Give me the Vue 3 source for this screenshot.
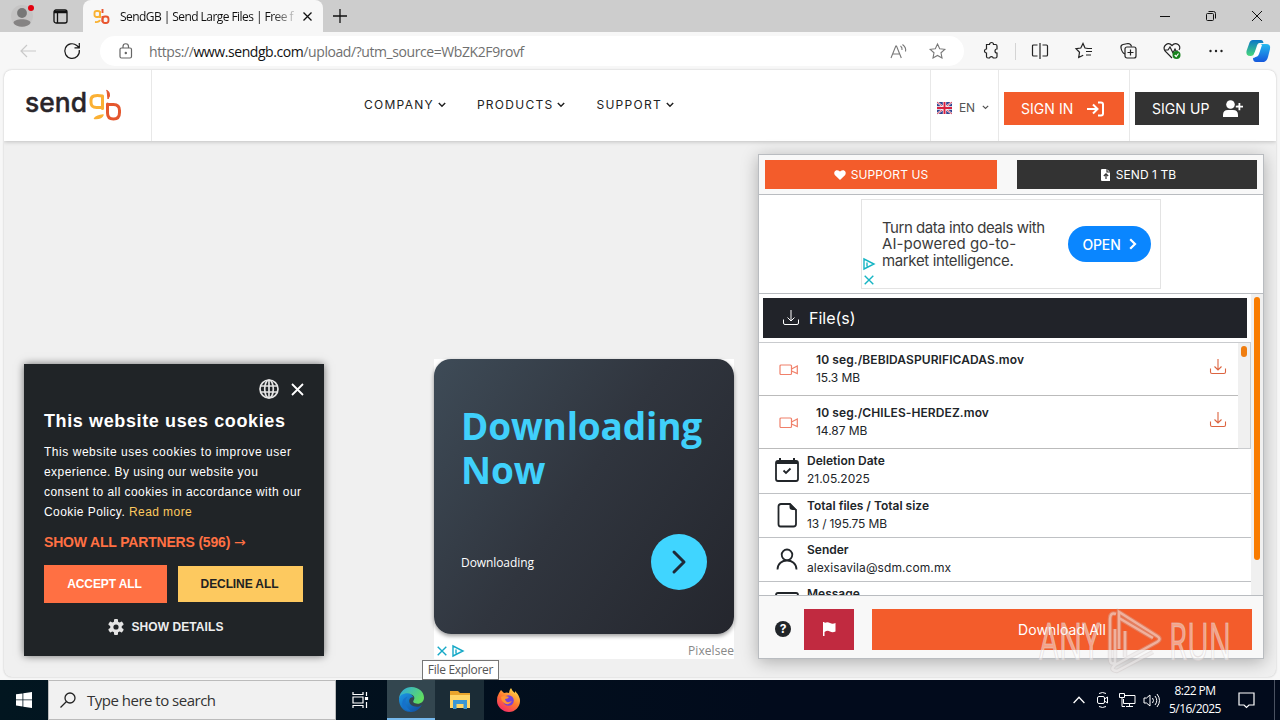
<template>
  <div class="desktop">
    <div class="titlebar">
      <div class="profile">
        <svg width="24" height="24" viewBox="0 0 24 24">
          <circle cx="12" cy="12" r="11" fill="#c5c4c4" />
          <circle cx="12" cy="9" r="4.900" fill="#777" />
          <path d="M3.500 19c0-5 17-5 17 0-3 5-14 5-17 0z" fill="#858383" />
          <circle cx="21" cy="4" r="3" fill="#e3000f" />
        </svg>
      </div>
      <div class="workspaces">
        <svg width="15" height="15" viewBox="0 0 15 15" fill="none" stroke="#111" stroke-width="1.300">
          <rect x="1" y="1" width="13" height="13" rx="2" />
          <path d="M1 3h13" stroke-width="2.500" />
          <path d="M4.500 3v11" />
        </svg>
      </div>
      <div class="tab">
        <svg class="favicon" width="17" height="17" viewBox="0 0 17 17" fill="none" stroke-width="1.900">
          <rect x="1.500" y="3" width="5.500" height="6" rx="2" stroke="#f9b233" />
          <path d="M7 3v7M2 14q4 .5 5-2" stroke="#f9b233" />
          <path d="M9.500 1v4M9.500 8v6" stroke="#e8552f" />
          <rect x="9.500" y="8.500" width="6" height="6.500" rx="2.500" stroke="#e8552f" />
        </svg>
        <span class="tab-title">SendGB | Send Large Files | Free f</span>
        <svg width="9" height="9" viewBox="0 0 9 9" stroke="#111" stroke-width="1.300">
          <path d="M.5.5l8 8M8.500.5l-8 8" />
        </svg>
      </div>
      <svg class="new-tab" width="14" height="14" viewBox="0 0 14 14" stroke="#111" stroke-width="1.300">
        <path d="M7 0v14M0 7h14" />
      </svg>
      <div class="window-buttons">
        <svg width="12" height="12" viewBox="0 0 12 12" fill="none" stroke="#111"><path d="M1 6.500h10" /></svg>
        <svg width="12" height="12" viewBox="0 0 12 12" fill="none" stroke="#111">
          <rect x="1.500" y="3.500" width="7" height="7" rx="1" />
          <path d="M3.500 1.500h5q2 0 2 2v5" />
        </svg>
        <svg width="12" height="12" viewBox="0 0 12 12" fill="none" stroke="#111"><path d="M1 1l10 10M11 1L1 11" /></svg>
      </div>
    </div>

    <div class="toolbar">
      <svg class="back" width="16" height="14" viewBox="0 0 16 14" fill="none" stroke="#c9c9c9" stroke-width="1.200">
        <path d="M16 7H1M7 1L1 7l6 6" />
      </svg>
      <svg class="reload" width="18" height="18" viewBox="0 0 18 18" fill="none" stroke="#1a1a1a" stroke-width="1.200">
        <path d="M16.300 8A7.300 7.300 0 1 1 13.800 3.500L16 5.500M16.300 1v4.800h-4.800" />
      </svg>
      <div class="address">
        <svg width="14" height="16" viewBox="0 0 14 16" fill="none" stroke="#666" stroke-width="1.200">
          <rect x="1" y="5" width="11.500" height="10" rx="1.500" />
          <path d="M4 5V3.500a2.700 2.700 0 0 1 5.500 0V5" />
          <circle cx="6.800" cy="10" r=".6" fill="#666" />
        </svg>
        <span class="url">https://<b>www.sendgb.com</b>/upload/?utm_source=WbZK2F9rovf</span>
        <svg class="read" width="17" height="15" viewBox="0 0 17 15" fill="none" stroke="#777" stroke-width="1.100">
          <path d="M1 14L5.800 2h.7l4.800 12M3 10h6.500M10.500 2q2 1.500 1.500 4M12.500.5q4 3 3 7" />
        </svg>
        <svg width="17" height="16" viewBox="0 0 17 16" fill="none" stroke="#777" stroke-width="1.100">
          <path d="M8.500 1l2.200 4.700 5.100.6-3.800 3.500 1 5.100-4.500-2.500L4 14.900l1-5.100-3.800-3.500 5.100-.6z" />
        </svg>
      </div>
      <div class="toolbar-icons">
        <svg width="18" height="18" viewBox="0 0 18 18"><path d="M4.500 2.500h3a2 2 0 0 1 4 0h2q1.500 0 1.500 1.500v3a2 2 0 0 0 0 4v3.500q0 1.500-1.500 1.500h-2.200a2 2 0 0 0-3.800 0H6q-1.500 0-1.500-1.500V11a2 2 0 1 1 0-4z" /></svg>
        <i class="divider"></i>
        <svg width="18" height="18" viewBox="0 0 18 18"><path d="M6.500 3h-4q-1 0-1 1v9q0 1 1 1h4M11.500 3h4q1 0 1 1v9q0 1-1 1h-4M9 1v16" /></svg>
        <svg width="18" height="18" viewBox="0 0 18 18"><path d="M13 6.500L10 6 8 1.500 5.800 6 1 6.700l3.500 3.600L3.700 15.500l4.500-2.300M11 9.500h6M11 13h5M11.500 6.500h5.500" /></svg>
        <svg width="18" height="18" viewBox="0 0 18 18"><path d="M6 12Q3 11 2 6q-.5-3 2-3.500l5-1q3 0 3.500 3" /><rect x="6" y="5" width="11" height="11" rx="2" /><path d="M11.500 7.500v6M8.500 10.500h6" /></svg>
        <svg width="18" height="18" viewBox="0 0 18 18">
          <path d="M9 16L2 9C-1 4 5-1 9 3.500 13-1 19 4 16 8M1 8h4l2-3 3 6 2-4 1 2h2" />
          <circle cx="13.500" cy="13" r="4" fill="#16821c" stroke="none" />
          <path d="M11.700 13l1.500 1.500 2.300-3" stroke="#fff" />
        </svg>
        <svg width="18" height="18" viewBox="0 0 18 18"><g fill="#222" stroke="none"><circle cx="3.500" cy="9" r="1.200" /><circle cx="9" cy="9" r="1.200" /><circle cx="14.500" cy="9" r="1.200" /></g></svg>
      </div>
      <svg class="copilot" width="24" height="24" viewBox="0 0 24 24">
        <defs>
          <linearGradient id="cpa" x1="0" y1="0" x2="0" y2="1"><stop offset="0" stop-color="#0a75c8" /><stop offset="1" stop-color="#47d87b" /></linearGradient>
          <linearGradient id="cpb" x1="0" y1="0" x2="0" y2="1"><stop offset="0" stop-color="#24b9ee" /><stop offset="1" stop-color="#1558dc" /></linearGradient>
        </defs>
        <path d="M7 1h8q2 0 2.500 3h-4q-2 0-3 4l-2 6q-1 3-4 3-5 0-4-5L3 5q1-4 4-4z" fill="url(#cpa)" />
        <path d="M17 5h3q5 0 4 5l-2 8q-1 4-4 5h-8q-3 0-3-4 3 0 4-4l2-6q1-4 4-4z" fill="url(#cpb)" />
        <path d="M11 9q1-4 5-3l-3 9q-1 3-4 3-2 0-1-3z" fill="#fff" />
      </svg>
    </div>

    <div class="viewport">
      <header class="site-header">
        <div class="logo">
          <svg width="98" height="34" viewBox="0 0 98 34" fill="none" stroke-linecap="round" stroke-linejoin="round">
            <text class="logo-word" x="0" y="24" textLength="62" lengthAdjust="spacingAndGlyphs">send</text>
            <path d="M77.500 8q-11.500-2-11.500 4v2.500q0 5 5.500 5h6z" stroke="#fbb034" stroke-width="3" />
            <path d="M77.500 9v11.500" stroke="#fbb034" stroke-width="3" />
            <path d="M69.500 30.500q7 .5 8.500-3.500-6 .5-8.500 3.500z" fill="#fbb034" stroke="#fbb034" stroke-width="1.500" />
            <path d="M82 2.500l1 8.500 1.500-3Q85 3.500 82 2.500z" fill="#e4572e" stroke="#e4572e" stroke-width="1" />
            <path d="M82.500 16v9q0 6 6 6t6-6.500v-2q0-6-6-6h-6" stroke="#e4572e" stroke-width="3" />
          </svg>
        </div>
        <nav>
          <a v-for="item in menu" :key="item">
            {{ item }}
            <svg width="8" height="6" viewBox="0 0 8 6" fill="none" stroke="#222" stroke-width="1.500"><path d="M.8 1L4 4.200 7.200 1" /></svg>
          </a>
        </nav>
        <div class="lang">
          <svg width="15" height="12" viewBox="0 0 15 12">
            <rect width="15" height="12" rx="1.500" fill="#33438f" />
            <path d="M0 0l15 12M15 0L0 12" stroke="#fff" stroke-width="1.800" />
            <path d="M0 0l15 12M15 0L0 12" stroke="#d8314b" stroke-width=".9" />
            <path d="M7.500 0v12M0 6h15" stroke="#fff" stroke-width="3.400" />
            <path d="M7.500 0v12M0 6h15" stroke="#d8213f" stroke-width="2" />
          </svg>
          <span>EN</span>
          <svg width="7" height="5" viewBox="0 0 7 5" fill="none" stroke="#555" stroke-width="1.200"><path d="M.8.8l2.700 2.700L6.200.8" /></svg>
        </div>
        <div class="sign sign-in">
          <button>
            SIGN IN
            <svg width="17" height="16" viewBox="0 0 17 16" fill="none" stroke="#fff" stroke-width="2">
              <path d="M0 8h10M6 3.500L10.500 8 6 12.500M11 1.500h3q2 0 2 2v9q0 2-2 2h-3" />
            </svg>
          </button>
        </div>
        <div class="sign sign-up">
          <button>
            SIGN UP
            <svg width="21" height="17" viewBox="0 0 21 17" fill="#fff">
              <circle cx="7.500" cy="4.500" r="4.300" />
              <path d="M0 17v-2q0-5 5-5h5q5 0 5 5v2zM15.500 5.500V3h1.800v2.700H20v1.800h-2.700v2.700h-1.800V7.500h-2.700V5.700z" />
            </svg>
          </button>
        </div>
      </header>

      <main>
        <div class="banner">
          <div class="banner-card">
            <h2>Downloading<br />Now</h2>
            <div class="banner-foot">
              <span>Downloading</span>
              <div class="go">
                <svg width="14" height="24" viewBox="0 0 14 24" fill="none" stroke="#1e2a38" stroke-width="3" stroke-linecap="round" stroke-linejoin="round"><path d="M2 2l10 10L2 22" /></svg>
              </div>
            </div>
          </div>
          <div class="banner-info">
            <svg width="10" height="10" viewBox="0 0 10 10" stroke="#16a9c7" stroke-width="1.400"><path d="M.7.7l8.600 8.600M9.300.7L.7 9.300" /></svg>
            <svg width="12" height="12" viewBox="0 0 12 12" fill="none" stroke="#16a9c7" stroke-width="1.400"><path d="M1 1l10 5-10 5zM4 4.500v4" /></svg>
            <span>Pixelsee</span>
          </div>
        </div>

        <section class="panel">
          <div class="panel-top">
            <button class="support">
              <svg width="12" height="10" viewBox="0 0 12 10" fill="#fff"><path d="M6 10L.8 5C-1 2 2-1.500 6 1.500 10-1.500 13 2 11.200 5z" /></svg>
              SUPPORT US
            </button>
            <button class="send">
              <svg width="10" height="12" viewBox="0 0 10 12"><path d="M1 0h5l3 3v9H1q-1 0-1-1V1q0-1 1-1z" fill="#fff" /><path d="M5 10V5M2.800 7L5 4.800 7.200 7M6 0v3h4" fill="none" stroke="#333" stroke-width="1.200" /></svg>
              SEND 1 TB
            </button>
          </div>

          <div class="ad-row">
            <div class="ad">
              <div class="ad-marks">
                <svg width="12" height="12" viewBox="0 0 12 12" fill="none" stroke="#16b5c4" stroke-width="1.400"><path d="M1 1l10 5-10 5zM4 4.500v4" /></svg>
                <svg width="10" height="10" viewBox="0 0 10 10" stroke="#16b5c4" stroke-width="1.400"><path d="M.7.7l8.600 8.600M9.300.7L.7 9.300" /></svg>
              </div>
              <p>Turn data into deals with<br /><span class="loose">AI-powered go-to-</span><br /><span class="last">market intelligence.</span></p>
              <div class="open">
                OPEN
                <svg width="8" height="12" viewBox="0 0 8 12" fill="none" stroke="#fff" stroke-width="2.200"><path d="M1.200 1.200L6 6l-4.800 4.800" /></svg>
              </div>
            </div>
          </div>

          <div class="panel-body">
            <div class="body-content">
              <div class="files-head">
                <svg width="16" height="16" viewBox="0 0 16 16" fill="none" stroke="#fff"><path :d="downloadPath" /></svg>
                File(s)
              </div>
              <div class="files">
                <div class="file-list">
                  <div v-for="file in files" :key="file.name" class="file">
                    <svg class="video" width="20" height="12" viewBox="0 0 20 12" fill="none" stroke="#f0806a" stroke-width="1.200">
                      <rect x="1" y="1" width="11.500" height="9.500" rx="1" />
                      <path d="M12.500 5l5.800-3v7.500L12.500 7" />
                    </svg>
                    <div class="text">
                      <b>{{ file.name }}</b>
                      <span>{{ file.size }}</span>
                    </div>
                    <svg class="get" width="16" height="16" viewBox="0 0 16 16" fill="none" stroke="#dc6440" stroke-width="1.100"><path :d="downloadPath" /></svg>
                  </div>
                </div>
                <div class="inner-track"><i></i></div>
              </div>
              <div v-for="row in details" :key="row.label" class="detail">
                <svg width="24" height="26" viewBox="0 0 24 26" fill="none" stroke="#212529" stroke-width="1.800"><path :d="row.icon" /><path v-if="row.fill" :d="row.fill" fill="#212529" stroke="none" /></svg>
                <div class="text">
                  <b>{{ row.label }}</b>
                  <span>{{ row.value }}</span>
                </div>
              </div>
            </div>
            <div class="track"><i></i></div>
          </div>

          <div class="panel-foot">
            <div class="help">?</div>
            <button class="flag">
              <svg width="13" height="14" viewBox="0 0 13 14" fill="#fff"><path d="M0 0h1.500v1q3-1.500 5.500 0t5.500 0v8.500q-3 1.500-5.500 0t-5.500.5v4H0z" /></svg>
            </button>
            <button class="download">Download All</button>
          </div>
        </section>
      </main>
    </div>

    <div class="cookies">
      <div class="cookie-tools">
        <svg width="20" height="20" viewBox="0 0 20 20" fill="none" stroke="#e4e4e4" stroke-width="1.700">
          <circle cx="10" cy="10" r="9" />
          <ellipse cx="10" cy="10" rx="4.300" ry="9" />
          <path d="M1.500 7h17M1.500 13h17M10 1v18" />
        </svg>
        <svg width="13" height="13" viewBox="0 0 13 13" stroke="#fff" stroke-width="1.800"><path d="M1 1l11 11M12 1L1 12" /></svg>
      </div>
      <h3>This website uses cookies</h3>
      <p><span class="wide">This website uses cookies to improve user</span><br />experience. By using our website you<br />consent to all cookies in accordance with our<br />Cookie Policy. <a>Read more</a></p>
      <div class="partners">SHOW ALL PARTNERS (596) <span>→</span></div>
      <div class="choices">
        <button class="accept">ACCEPT ALL</button>
        <button class="decline">DECLINE ALL</button>
      </div>
      <div class="show-details">
        <svg width="16" height="16" viewBox="0 0 16 16">
          <g fill="#e4e4e4"><rect v-for="a in [0, 60, 120]" :key="a" x="6" y="0" width="4" height="16" rx="1" :transform="`rotate(${a} 8 8)`" /><circle cx="8" cy="8" r="5.800" /></g>
          <circle cx="8" cy="8" r="2.600" fill="#202427" />
        </svg>
        SHOW DETAILS
      </div>
    </div>

    <svg class="watermark" width="200" height="66" viewBox="0 0 200 66">
      <text x="4" y="51" textLength="61" lengthAdjust="spacingAndGlyphs">ANY</text>
      <text x="134" y="51" textLength="62" lengthAdjust="spacingAndGlyphs">RUN</text>
      <path class="edge" :d="markPath" />
      <path class="band" :d="markPath" />
    </svg>

    <div class="taskbar">
      <div class="start">
        <svg width="16" height="16" viewBox="0 0 16 16" fill="#fff"><path d="M0 2.300l6.500-.9v6.100H0zM7.300 1.300L16 0v7.500H7.300zM0 8.300h6.500v6.200L0 13.600zM7.300 8.300H16V16l-8.700-1.300z" /></svg>
      </div>
      <div class="search">
        <svg width="16" height="16" viewBox="0 0 16 16" fill="none" stroke="#222" stroke-width="1.300"><circle cx="10" cy="6" r="5" /><path d="M6.500 9.500L.5 15.500" /></svg>
        <span>Type here to search</span>
      </div>
      <div class="task">
        <svg width="17" height="16" viewBox="0 0 17 16" fill="none" stroke="#fff" stroke-width="1.200"><path d="M1 0v2.500h10V0M1 16v-2.500h10V16M1 5h10v6H1zM14.500 0v4M14.500 10v6" /><path d="M13.500 5.500h2v2h-2z" fill="#fff" /></svg>
      </div>
      <div class="task active">
        <svg width="25" height="25" viewBox="0 0 24 24">
          <defs>
            <linearGradient id="edg" x1="0" y1="0" x2="1" y2=".5"><stop offset="0" stop-color="#2aa7e8" /><stop offset="1" stop-color="#60dd60" /></linearGradient>
            <linearGradient id="edb" x1="0" y1="0" x2="1" y2="1"><stop offset="0" stop-color="#1b98e6" /><stop offset="1" stop-color="#104a9c" /></linearGradient>
          </defs>
          <path d="M0 11C1 4 6 0 12 0c7 0 12 5 12 10 0 4-3 6-6 6-4 0-5-2-4-3 2-3 0-6-4-6-5 0-8 2-10 4z" fill="url(#edg)" />
          <path d="M0 12c0-4 4-6 8-6 3 0 5 2 6 4-6-1-6 9 3 9 2 0 4-1 5-2-3 6-8 7-11 7C4 24 0 18 0 12z" fill="url(#edb)" />
          <path d="M8 9q-5 7 3 14-7 0-8-7 0-5 5-7z" fill="#1671ca" />
        </svg>
      </div>
      <div class="task hover">
        <svg width="22" height="20" viewBox="0 0 22 20">
          <path d="M1 1h8l2 2h10v4H1z" fill="#e9a52c" />
          <path d="M1 5h20v13H1z" fill="#ffd667" />
          <path d="M4 10h14v9h-3.500v-5h-7v5H4z" fill="#3a97d4" />
        </svg>
      </div>
      <div class="task">
        <svg width="23" height="24" viewBox="0 0 23 24">
          <defs><linearGradient id="ffx" x1=".8" y1="0" x2=".2" y2="1"><stop offset="0" stop-color="#ffe14a" /><stop offset=".5" stop-color="#ff7a2e" /><stop offset="1" stop-color="#f4246c" /></linearGradient></defs>
          <path d="M2 5l2-3 3 3q3-1 5 0 0-3 2-5 1 3 4 5V3q5 5 5 10c0 6-5 11-11 11S0 19 0 13q0-5 2-8z" fill="url(#ffx)" />
          <circle cx="11.500" cy="12.500" r="5.300" fill="#7542d9" />
          <path d="M4 9q3-2 8 0-1 2-4 2 1 5 7 2-4 6-9 1Q4 12 4 9z" fill="#ff9530" />
        </svg>
      </div>
      <div class="tray">
        <svg width="12" height="8" viewBox="0 0 12 8" fill="none" stroke="#fff" stroke-width="1.300"><path d="M.6 7L6 1.300 11.400 7" /></svg>
        <svg width="13" height="16" viewBox="0 0 13 16" fill="none" stroke="#fff"><rect x="1.500" y="4.500" width="7" height="7" rx="1.500" /><path d="M8.500 7L11.500 5v6l-3-2M3 1.500q3.500-2 7 0M3 14.500q3.500 2 7 0" /></svg>
        <svg width="17" height="15" viewBox="0 0 17 15" fill="none" stroke="#fff"><path d="M6 2.500h10v8H4.500V6M10.500 10.500v3M7 13.500h7M.5.5h5v4h-5zM3 5v8.500h3" /></svg>
        <svg width="17" height="15" viewBox="0 0 17 15" fill="none" stroke="#fff"><path d="M1 5h2.500L7 2v11l-3.500-3H1zM9.500 5q2 2.500 0 5M12 3q3.500 4.500 0 9M14 1q5 6.500 0 13" /></svg>
        <div class="clock"><span>8:22 PM</span><span>5/16/2025</span></div>
        <svg width="17" height="17" viewBox="0 0 17 17" fill="none" stroke="#fff" stroke-width="1.200"><path d="M1 1h15v12h-5l-2.500 2.500L6 13H1z" /></svg>
        <i class="peek"></i>
      </div>
    </div>
    <div class="tooltip">File Explorer</div>
  </div>
</template>

<script setup>
const menu = ["COMPANY", "PRODUCTS", "SUPPORT"];

const files = [
  { name: "10 seg./BEBIDASPURIFICADAS.mov", size: "15.3 MB" },
  { name: "10 seg./CHILES-HERDEZ.mov", size: "14.87 MB" },
];

const downloadPath = "M.5 9.500V13q0 1.500 1.500 1.500h12q1.500 0 1.500-1.500V9.500M8 0v11M4.500 7.500L8 11l3.500-3.500";

const markPath = "M81 5q-6-2-6 5v40q0 6 5 4V20M84 40V3l38 24q5 3 0 6L80 56q-6 5 2 6l36-19M84 9l34 20M90 48V22";

const details = [
  {
    label: "Deletion Date",
    value: "21.05.2025",
    icon: "M3 3h18q2 0 2 2v16q0 2-2 2H3q-2 0-2-2V5q0-2 2-2zM8.500 12.500l2.500 2.500 4.500-4.500",
    fill: "M1 3h3V0h2v2h12V0h2v3h3v3H1z",
  },
  {
    label: "Total files / Total size",
    value: "13 / 195.75 MB",
    icon: "M6 1h9l6 6v14q0 2.500-2.500 2.500h-13Q3.500 23.500 3.500 21V3.500Q3.500 1 6 1z",
    fill: "M14.500 0v4q0 3 3 3H22z",
  },
  {
    label: "Sender",
    value: "alexisavila@sdm.com.mx",
    icon: "M12 2.500a5.300 5.300 0 1 1 0 10.600a5.300 5.300 0 1 1 0-10.600zM2.500 22.500c0-12 19-12 19 0",
  },
  { label: "Message", value: "", icon: "M3 2h18q2 0 2 2v14H1V4q0-2 2-2z" },
];
</script>

<style>
body {
  margin: 0;
  overflow: hidden;
}
</style>

<style scoped>
* {
  box-sizing: border-box;
}

.desktop {
  position: relative;
  display: flex;
  flex-direction: column;
  width: 1280px;
  height: 720px;
  overflow: hidden;
  background: #f7f7f7;
  font-family: Inter, "Liberation Sans", sans-serif;
  color: #212529;
}

svg {
  display: block;
  flex-shrink: 0;
  overflow: visible;
}

button {
  display: flex;
  align-items: center;
  justify-content: center;
  border: 0;
  padding: 0;
  color: #fff;
  font-family: inherit;
}

.titlebar {
  display: flex;
  align-items: center;
  height: 32px;
  flex-shrink: 0;
  background: #cdcdcd;
}

.profile {
  padding-left: 10px;
  width: 53px;
}

.workspaces {
  width: 30px;
}

.tab {
  display: flex;
  align-items: center;
  width: 240px;
  height: 32px;
  padding-left: 10px;
  border-radius: 8px 8px 0 0;
  background: #f7f7f7;
}

.tab-title {
  width: 182px;
  margin: 0 1px 0 10px;
  overflow: hidden;
  white-space: nowrap;
  font: 12px "Open Sans", sans-serif;
  letter-spacing: -0.56px;
  color: #111;
  -webkit-mask-image: linear-gradient(90deg, #000 152px, transparent 180px);
}

.new-tab {
  margin-left: 10px;
}

.window-buttons {
  display: flex;
  gap: 34px;
  margin: 0 17px 0 auto;
}

.toolbar {
  display: flex;
  align-items: center;
  height: 38px;
  flex-shrink: 0;
}

.back {
  margin-left: 20px;
}

.reload {
  margin-left: 27px;
}

.address {
  display: flex;
  align-items: center;
  width: 864px;
  height: 30px;
  margin-left: 19px;
  padding: 0 18px 0 19px;
  border-radius: 15px;
  background: #fff;
}

.url {
  margin-left: 16px;
  white-space: nowrap;
  font: 14px "Open Sans", sans-serif;
  letter-spacing: -0.42px;
  color: #707070;
}

.url b {
  font-weight: 400;
  color: #111;
}

.read {
  margin: 0 22px 0 auto;
}

.toolbar-icons {
  display: flex;
  align-items: center;
  gap: 26px;
  margin-left: 18px;
}

.toolbar-icons svg {
  fill: none;
  stroke: #222;
  stroke-width: 1.2;
}

.divider {
  width: 1px;
  height: 17px;
  margin: 0 -11px 0 -11px;
  background: #d4d4d4;
}

.copilot {
  margin-left: 21px;
}

.viewport {
  display: flex;
  flex-direction: column;
  height: 607px;
  margin: 0 4px 3px;
  border-radius: 8px;
  overflow: hidden;
  background: #f0f0f0;
  box-shadow: 0 0 2px #bbb;
}

.site-header {
  display: flex;
  height: 71px;
  flex-shrink: 0;
  background: #fff;
  box-shadow: 0 1px 4px rgba(0, 0, 0, 0.2);
}

.logo {
  width: 148px;
  padding: 18px 0 0 21px;
  border-right: 1px solid #e8e8e8;
}

.logo-word {
  font: 500 27px Inter, sans-serif;
  fill: #29252a;
  stroke: #29252a;
  stroke-width: 0.4;
}

nav {
  display: flex;
  gap: 31px;
  width: 778px;
  padding: 27px 0 0 212px;
}

nav a {
  display: flex;
  gap: 4px;
  height: 15px;
  align-items: center;
  font-size: 12px;
  letter-spacing: 1.27px;
  color: #222;
}

.lang {
  display: flex;
  align-items: center;
  gap: 7px;
  width: 69px;
  padding: 4px 0 0 6px;
  border: 1px solid #e8e8e8;
  border-width: 0 1px;
  font-size: 12px;
  letter-spacing: -0.2px;
  color: #555;
}

.sign {
  padding: 22px 5px 0;
}

.sign button {
  height: 33px;
  font-size: 14px;
}

.sign-in {
  border-right: 1px solid #e8e8e8;
}

.sign-in button {
  justify-content: flex-start;
  width: 120px;
  gap: 14px;
  padding-left: 17px;
  background: #f35c2b;
  letter-spacing: 0.05px;
}

.sign-up button {
  justify-content: flex-start;
  width: 124px;
  gap: 14px;
  padding-left: 17px;
  background: #333;
  letter-spacing: 0.05px;
}

main {
  display: flex;
  justify-content: flex-end;
  align-items: flex-end;
  gap: 24px;
  height: 518px;
  padding-right: 12px;
}

.banner {
  width: 300px;
  height: 300px;
  background: #fff;
}

.banner-card {
  display: flex;
  flex-direction: column;
  justify-content: space-between;
  height: 275px;
  padding: 45px 27px 44px;
  border-radius: 17px;
  background: linear-gradient(125deg, #3e4b57, #30353e 48%, #24262d);
  box-shadow: 0 2px 4px rgba(0, 0, 0, 0.4);
}

h2 {
  margin: 0;
  font: 700 37px/44px "Open Sans", sans-serif;
  letter-spacing: -0.15px;
  color: #40d0fb;
}

.banner-foot {
  display: flex;
  align-items: center;
  justify-content: space-between;
  font: 12px "Open Sans", sans-serif;
  letter-spacing: -0.08px;
  color: #fff;
}

.go {
  display: flex;
  align-items: center;
  justify-content: center;
  width: 56px;
  height: 56px;
  border-radius: 50%;
  background: #40d5ff;
}

.banner-info {
  display: flex;
  align-items: center;
  gap: 5px;
  padding: 8px 0 0 3px;
  font: 12px "Open Sans", sans-serif;
  letter-spacing: 0.05px;
  color: #888;
}

.banner-info span {
  margin-left: auto;
}

.panel {
  display: flex;
  flex-direction: column;
  width: 506px;
  height: 505px;
  border: 1px solid #b9bcc0;
  background: #fff;
  box-shadow: 0 3px 16px rgba(0, 0, 0, 0.28);
}

.panel-top {
  display: flex;
  justify-content: space-between;
  height: 40px;
  flex-shrink: 0;
  padding: 5px 6px;
  border-bottom: 1px solid #b9bcc0;
  background: #f8f8f8;
}

.panel-top button {
  gap: 5px;
  height: 29px;
  font-size: 12px;
  letter-spacing: 0.08px;
}

.support {
  width: 232px;
  background: #f35c2b;
}

.panel-top .send {
  width: 240px;
  padding-left: 3px;
  background: #333;
}

.ad-row {
  display: flex;
  justify-content: center;
  height: 99px;
  flex-shrink: 0;
  padding-top: 4px;
  border-bottom: 1px solid #b9bcc0;
}

.ad {
  display: flex;
  align-items: flex-end;
  width: 300px;
  height: 90px;
  border: 1px solid #e3e3e3;
}

.ad-marks {
  display: flex;
  flex-direction: column;
  align-items: center;
  gap: 5px;
  width: 14px;
  padding-bottom: 3px;
}

.ad p {
  width: 192px;
  margin: 0 0 19px 6px;
  white-space: nowrap;
  font-size: 15px;
  line-height: 16.5px;
  letter-spacing: -0.46px;
  color: #3b3b3b;
}

.ad p .loose {
  letter-spacing: 0.05px;
}

.ad p .last {
  letter-spacing: -0.36px;
}

.open {
  display: flex;
  align-items: center;
  justify-content: center;
  gap: 8px;
  width: 83px;
  height: 36px;
  margin: 0 0 26px -6px;
  border-radius: 18px;
  background: #0a86ff;
  color: #fff;
  font-size: 14px;
  font-weight: 500;
  letter-spacing: -0.15px;
}

.panel-body {
  display: flex;
  height: 301px;
  flex-shrink: 0;
  overflow: hidden;
}

.body-content {
  width: 492px;
}

.files-head {
  display: flex;
  align-items: center;
  gap: 10px;
  height: 40px;
  margin: 4px 4px 4px;
  padding-left: 20px;
  background: #212329;
  color: #fff;
  font-size: 16px;
}

.files {
  display: flex;
  height: 107px;
  border: 1px solid #c9cbce;
  border-width: 1px 1px 1px 0;
}

.file-list {
  flex: 1;
}

.file {
  display: flex;
  align-items: center;
  height: 53px;
  padding-left: 20px;
  border-bottom: 1px solid #bbb;
}

.file .video {
  margin-top: 2px;
}

.file .text {
  margin: -1px 0 0 17px;
}

.text {
  display: flex;
  flex-direction: column;
  font-size: 12px;
  line-height: 18px;
  white-space: nowrap;
}

.text b {
  font-weight: 600;
}

.file b {
  letter-spacing: 0.09px;
}

.file span {
  letter-spacing: -0.05px;
}

.get {
  margin: -4px 12px 0 auto;
}

.inner-track {
  width: 12px;
  padding: 3px;
  background: #f0f0f0;
}

.inner-track i {
  display: block;
  height: 11px;
  border-radius: 3px;
  background: #ef7d10;
}

.detail {
  display: flex;
  align-items: center;
  gap: 8px;
  height: 44px;
  padding-left: 16px;
  border-bottom: 1px solid #bfc1c4;
}

.files + .detail {
  height: 45px;
}

.detail .text {
  height: 36px;
  margin-top: -2px;
}

.detail:nth-of-type(5) span {
  letter-spacing: 0.08px;
}

.detail:nth-of-type(4) span {
  letter-spacing: -0.15px;
}

.track {
  flex: 1;
  padding: 3px;
  background: #f0f0f0;
}

.track i {
  display: block;
  height: 263px;
  border-radius: 4px;
  background: #f97c00;
}

.panel-foot {
  display: flex;
  align-items: center;
  flex: 1;
  padding: 4px 11px 0 16px;
  border-top: 1px solid #b9bcc0;
  background: #f8f8f8;
}

.help {
  width: 16px;
  border-radius: 50%;
  background: #212529;
  color: #fff;
  font-size: 12px;
  font-weight: 700;
  line-height: 16px;
  text-align: center;
}

.flag {
  width: 50px;
  height: 41px;
  margin: 0 18px 0 13px;
  background: #c12a40;
}

.download {
  flex: 1;
  height: 41px;
  background: #f35c2b;
  font-size: 14px;
  letter-spacing: 0.1px;
}

.cookies {
  position: absolute;
  left: 24px;
  top: 364px;
  width: 300px;
  height: 292px;
  padding: 15px 20px;
  background: #202427;
  box-shadow: 0 0 8px rgba(0, 0, 0, 0.55);
  font-family: "Liberation Sans", sans-serif;
  color: #fff;
}

.cookie-tools {
  display: flex;
  align-items: center;
  justify-content: flex-end;
  gap: 12px;
}

h3 {
  margin: 11px 0 10px;
  font-size: 18px;
  line-height: 22px;
  letter-spacing: 0.62px;
  white-space: nowrap;
}

.cookies p {
  margin: 0;
  white-space: nowrap;
  font-size: 12px;
  line-height: 20px;
  letter-spacing: 0.43px;
}

.cookies p .wide {
  letter-spacing: 0.54px;
}

.cookies p a {
  color: #fdc95f;
}

.partners {
  margin-top: 10px;
  color: #ff7043;
  font-size: 14px;
  font-weight: 700;
  line-height: 20px;
  letter-spacing: -0.18px;
}

.partners span {
  font-family: "DejaVu Sans", sans-serif;
  font-weight: 400;
}

.choices {
  display: flex;
  align-items: center;
  justify-content: space-between;
  width: 259px;
  height: 38px;
  margin-top: 13px;
}

.choices button {
  font-size: 12px;
  font-weight: 700;
  letter-spacing: -0.1px;
}

.accept {
  width: 123px;
  height: 38px;
  padding-right: 2px;
  background: #ff7043;
}

.decline {
  width: 125px;
  height: 36px;
  padding-right: 2px;
  background: #fdc95f;
  color: #222;
}

.show-details {
  display: flex;
  align-items: center;
  justify-content: center;
  gap: 7px;
  margin: 16px 16px 0 0;
  font-size: 12px;
  font-weight: 700;
  letter-spacing: 0.08px;
  color: #eee;
}

.watermark {
  position: absolute;
  left: 1035px;
  top: 609px;
}

.watermark text {
  font: 52px "Open Sans", sans-serif;
  fill: rgba(255, 255, 255, 0.45);
  stroke: rgba(215, 205, 205, 0.55);
  stroke-width: 1.2;
}

.watermark path {
  fill: none;
}

.watermark .edge {
  stroke: rgba(200, 190, 190, 0.35);
  stroke-width: 4.5;
}

.watermark .band {
  stroke: rgba(255, 255, 255, 0.4);
  stroke-width: 2.5;
}

.taskbar {
  display: flex;
  height: 40px;
  flex-shrink: 0;
  background: linear-gradient(90deg, #021620, #020b1c 60%);
}

.start {
  display: flex;
  align-items: center;
  justify-content: center;
  width: 48px;
}

.search {
  display: flex;
  align-items: center;
  gap: 11px;
  width: 288px;
  padding-left: 11px;
  border: 1px solid #bbb;
  background: #f1f1f1;
  font: 15px "Open Sans", sans-serif;
  letter-spacing: -0.5px;
  color: #333;
}

.task {
  display: flex;
  align-items: center;
  justify-content: center;
  width: 49px;
}

.task:nth-child(3) {
  width: 51px;
  padding-right: 2px;
}

.active {
  width: 48px;
  border-bottom: 2px solid #76b9ed;
  background: #33464f;
}

.hover {
  background: #1b2c36;
}

.tray {
  display: flex;
  align-items: center;
  gap: 11px;
  margin-left: auto;
  width: 207px;
}

.tray svg:nth-child(3) {
  margin-right: -4px;
}

.tray svg:nth-child(2) {
  margin-right: -1px;
}

.clock {
  display: flex;
  flex-direction: column;
  align-items: center;
  width: 56px;
  margin-right: 4px;
  margin-left: -4px;
  font: 12px/18px "Open Sans", sans-serif;
  letter-spacing: -0.55px;
  color: #fff;
}

.peek {
  width: 1px;
  height: 40px;
  margin-left: 8px;
  background: #4a5261;
}

.tooltip {
  position: absolute;
  left: 422px;
  top: 660px;
  width: 77px;
  height: 20px;
  border: 1px solid #767676;
  background: #fff;
  font: 12px/18px "Open Sans", sans-serif;
  letter-spacing: -0.3px;
  text-align: center;
  color: #555;
}
</style>
